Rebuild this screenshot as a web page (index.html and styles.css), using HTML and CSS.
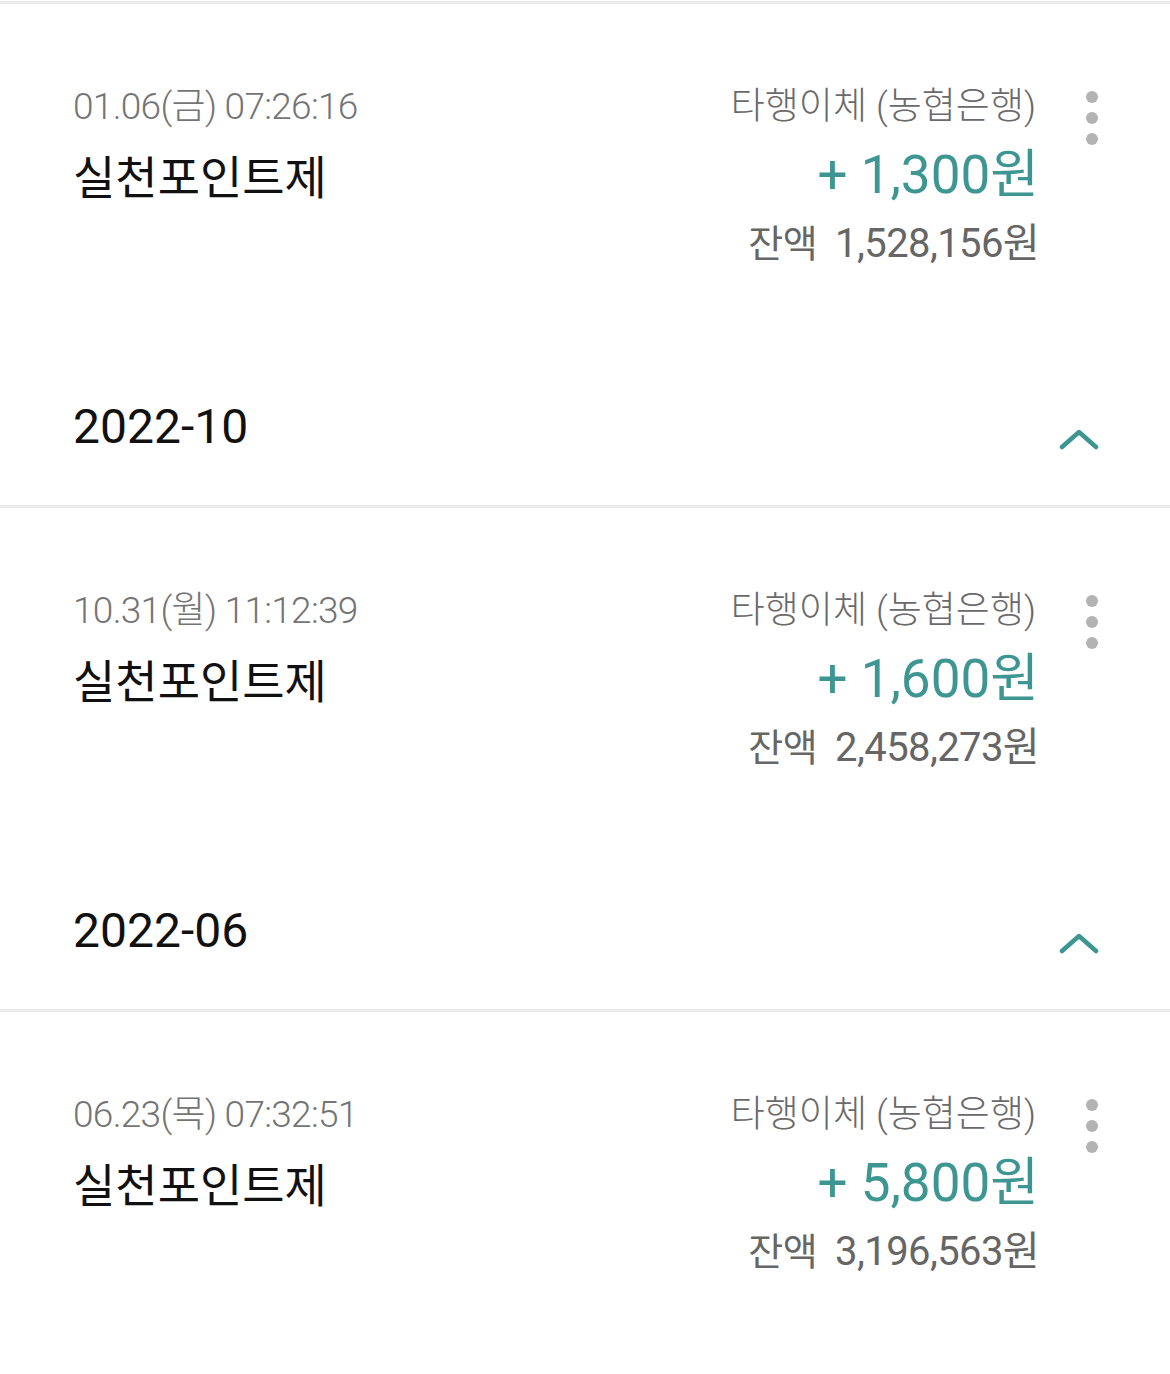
FILE: index.html
```html
<!DOCTYPE html>
<html lang="ko">
<head>
<meta charset="utf-8">
<title>거래내역</title>
<link rel="stylesheet" href="styles.css">
</head>
<body>
<div class="list">
  <div class="divider first"></div>

  <div class="txn">
    <div class="txn-left">
      <div class="txn-date">01.06(금) 07:26:16</div>
      <div class="txn-title">실천포인트제</div>
    </div>
    <div class="txn-right">
      <div class="txn-type">타행이체 (농협은행)</div>
      <div class="txn-amount">+ 1,300원</div>
      <div class="txn-balance"><span class="bal-label">잔액</span>1,528,156원</div>
    </div>
    <div class="more"><span></span><span></span><span></span></div>
  </div>

  <div class="month">
    <div class="month-title">2022-10</div>
    <svg class="chevron" viewBox="0 0 40 24" width="40" height="24"><path d="M3 19 L20 4 L37 19" fill="none" stroke="#3d9691" stroke-width="4.5" stroke-linecap="round" stroke-linejoin="round"/></svg>
  </div>
  <div class="divider"></div>

  <div class="txn">
    <div class="txn-left">
      <div class="txn-date">10.31(월) 11:12:39</div>
      <div class="txn-title">실천포인트제</div>
    </div>
    <div class="txn-right">
      <div class="txn-type">타행이체 (농협은행)</div>
      <div class="txn-amount">+ 1,600원</div>
      <div class="txn-balance"><span class="bal-label">잔액</span>2,458,273원</div>
    </div>
    <div class="more"><span></span><span></span><span></span></div>
  </div>

  <div class="month">
    <div class="month-title">2022-06</div>
    <svg class="chevron" viewBox="0 0 40 24" width="40" height="24"><path d="M3 19 L20 4 L37 19" fill="none" stroke="#3d9691" stroke-width="4.5" stroke-linecap="round" stroke-linejoin="round"/></svg>
  </div>
  <div class="divider"></div>

  <div class="txn">
    <div class="txn-left">
      <div class="txn-date">06.23(목) 07:32:51</div>
      <div class="txn-title">실천포인트제</div>
    </div>
    <div class="txn-right">
      <div class="txn-type">타행이체 (농협은행)</div>
      <div class="txn-amount">+ 5,800원</div>
      <div class="txn-balance"><span class="bal-label">잔액</span>3,196,563원</div>
    </div>
    <div class="more"><span></span><span></span><span></span></div>
  </div>
</div>
</body>
</html>
```

FILE: styles.css
```css
html, body {
  margin: 0;
  padding: 0;
  background: #ffffff;
}
body {
  font-family: Roboto, "Noto Sans CJK KR", sans-serif;
  color: #111;
}
.list {
  display: flex;
  flex-direction: column;
}
.divider {
  height: 3px;
  background: #ebebeb;
}
.divider.first {
  margin-top: 1px;
}
.txn {
  display: flex;
  align-items: flex-start;
  padding: 79px 72px 64px 73px;
}
.txn-left {
  flex: 1;
}
.txn-date {
  font-size: 37px;
  line-height: 48px;
  font-weight: 300;
  color: #747474;
  letter-spacing: -0.7px;
}
.txn-title {
  margin-top: 17px;
  font-size: 46px;
  line-height: 60px;
  color: #111;
}
.txn-right {
  text-align: right;
}
.txn-type {
  font-size: 37px;
  line-height: 48px;
  font-weight: 300;
  color: #6a6a6a;
}
.txn-amount {
  margin-top: 12px;
  margin-right: -3px;
  font-size: 53px;
  line-height: 64px;
  color: #3d9691;
}
.txn-balance {
  margin-top: 12px;
  margin-right: -3px;
  font-size: 40px;
  line-height: 50px;
  color: #666;
  letter-spacing: -0.6px;
}
.bal-label {
  font-size: 38px;
  margin-right: 18px;
}
.more {
  display: flex;
  flex-direction: column;
  gap: 9px;
  margin-left: 50px;
  margin-top: 8px;
}
.more span {
  width: 12px;
  height: 12px;
  border-radius: 50%;
  background: #b3b3b3;
}
.month {
  display: flex;
  align-items: flex-start;
  justify-content: space-between;
  padding: 64px 71px 48px 73px;
}
.month-title {
  font-size: 48px;
  line-height: 60px;
  color: #111;
}
.chevron {
  display: block;
  margin-top: 31px;
}
```
